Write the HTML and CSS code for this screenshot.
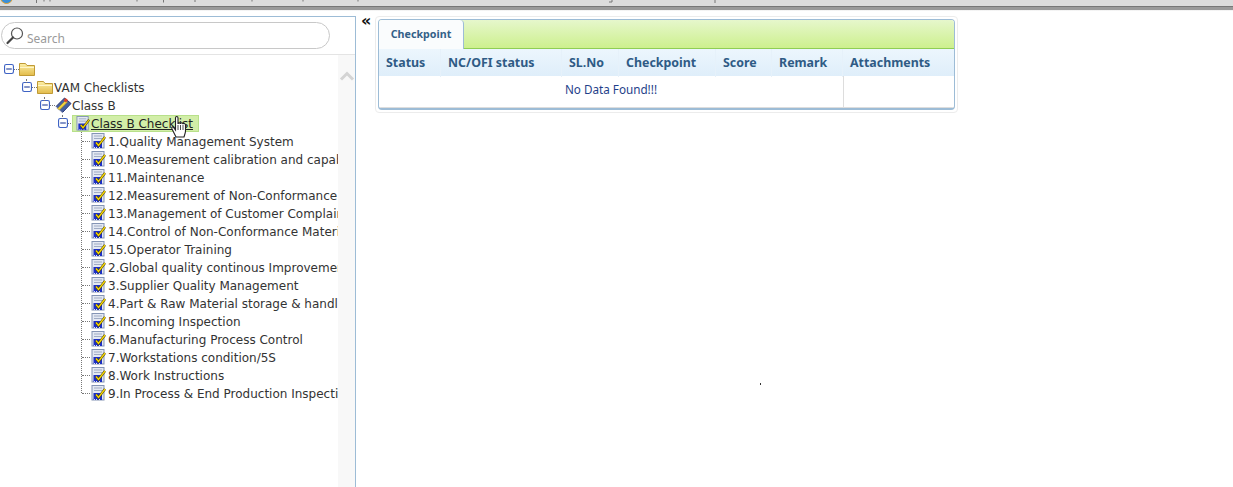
FILE: index.html
```html
<!DOCTYPE html>
<html lang="en">
<head>
<meta charset="utf-8">
<title>Checklist</title>
<link rel="stylesheet" href="styles.css">
</head>
<body>
<svg class="defs" width="0" height="0" aria-hidden="true">
  <defs>
    <linearGradient id="fold" x1="0" y1="0" x2="0" y2="1"><stop offset="0" stop-color="#fdf0a8"/><stop offset="1" stop-color="#e2bb4a"/></linearGradient>
    <symbol id="minus" viewBox="0 0 9 9"><rect x=".5" y=".5" width="8" height="8" rx="1.500" fill="#fff" stroke="#3f63c4"/><path d="M2 4.500h5" stroke="#24409c"/></symbol>
    <symbol id="folder" viewBox="0 0 16 14"><path d="M.5 13.500V1.500h6l1.500 2h7.500v10z" fill="url(#fold)" stroke="#c09a35"/><path d="M1 5.500h14" stroke="#fff6c8"/></symbol>
    <symbol id="book" viewBox="0 0 17 17"><path d="M1 9.500 9.500 1 16 6.500 7.500 15.500z" fill="#46609f" stroke="#2b3a78"/><path d="M1 9.500 7.500 15.500v1L1 11z" fill="#d5d9ea"/><path d="M2.500 11.500 10.500 3.500l2 1.500-8 8z" fill="#f2d23c" stroke="#9c8420" stroke-width=".5"/><path d="M8.500 3.500l2-2.500 2.500 2-2 2.500z" fill="#d6402f"/></symbol>
    <symbol id="check" viewBox="0 0 16 16"><rect x="1" y=".5" width="12" height="14.500" fill="#e3e8f2" stroke="#8494b4"/><path d="M3 3h8M3 5.500h8" stroke="#9fabc4"/><rect x="2.500" y="8" width="8.500" height="7" fill="#1c2fc4"/><path d="M3 14h1v1H3zM5 14h1v1H5zM8 14h1v1H8z" fill="#dfe5f6"/><path d="M5 9.500 7.500 12.500 14 4" fill="none" stroke="#4d4410" stroke-width="2.400"/><path d="M5 9.500 7.500 12.500 14 4" fill="none" stroke="#f8d800" stroke-width="1.300"/></symbol>
  </defs>
</svg>

<header class="chrome">
  <span class="chrome-logo"></span>
  <svg class="chrome-ticks" width="800" height="6" viewBox="0 0 800 6"><path d="M36.500 0v3M44 0v1.500M50 0v1.500M137 0v1.500M163.500 0v2.500M195 0v2M252 0v1.500M303 0v1.500M358 0v1.500M612 0v2h-3M715 0v3" stroke="#777" fill="none"/></svg>
</header>

<div class="app">
  <aside class="side">
    <div class="search-row">
      <label class="search">
        <svg class="search-icon" width="20" height="20" viewBox="0 0 20 20"><circle cx="12" cy="7.500" r="5.500" fill="#fff" stroke="#555" stroke-width="1.200"/><path d="M8 11.500 2.500 17" stroke="#444" stroke-width="2.200" stroke-linecap="round"/></svg>
        <span class="search-text">Search</span>
      </label>
    </div>
    <div class="tree-wrap">
      <div class="tree">
        <div class="node lvl0"><svg class="tg"><use href="#minus"/></svg><i class="dash"></i><svg class="ic-folder"><use href="#folder"/></svg></div>
        <div class="node lvl1"><i class="up"></i><svg class="tg"><use href="#minus"/></svg><i class="dash"></i><svg class="ic-folder"><use href="#folder"/></svg><span>VAM Checklists</span></div>
        <div class="node lvl2"><i class="up"></i><svg class="tg"><use href="#minus"/></svg><i class="dash"></i><svg class="ic-book"><use href="#book"/></svg><span>Class B</span></div>
        <div class="node lvl3"><i class="up"></i><svg class="tg"><use href="#minus"/></svg><i class="dash"></i>
          <a class="selected"><svg class="ic-check"><use href="#check"/></svg><span class="sel-text">Class B Checklist</span></a>
        </div>
        <ul class="leaves">
          <li><svg class="ic-check"><use href="#check"/></svg><span>1.Quality Management System</span></li>
          <li><svg class="ic-check"><use href="#check"/></svg><span>10.Measurement calibration and capability</span></li>
          <li><svg class="ic-check"><use href="#check"/></svg><span>11.Maintenance</span></li>
          <li><svg class="ic-check"><use href="#check"/></svg><span>12.Measurement of Non-Conformance</span></li>
          <li><svg class="ic-check"><use href="#check"/></svg><span>13.Management of Customer Complaints</span></li>
          <li><svg class="ic-check"><use href="#check"/></svg><span>14.Control of Non-Conformance Material</span></li>
          <li><svg class="ic-check"><use href="#check"/></svg><span>15.Operator Training</span></li>
          <li><svg class="ic-check"><use href="#check"/></svg><span>2.Global quality continous Improvement</span></li>
          <li><svg class="ic-check"><use href="#check"/></svg><span>3.Supplier Quality Management</span></li>
          <li><svg class="ic-check"><use href="#check"/></svg><span>4.Part &amp; Raw Material storage &amp; handling</span></li>
          <li><svg class="ic-check"><use href="#check"/></svg><span>5.Incoming Inspection</span></li>
          <li><svg class="ic-check"><use href="#check"/></svg><span>6.Manufacturing Process Control</span></li>
          <li><svg class="ic-check"><use href="#check"/></svg><span>7.Workstations condition/5S</span></li>
          <li><svg class="ic-check"><use href="#check"/></svg><span>8.Work Instructions</span></li>
          <li><svg class="ic-check"><use href="#check"/></svg><span>9.In Process &amp; End Production Inspection</span></li>
        </ul>
      </div>
      <div class="rail">
        <svg width="16" height="10" viewBox="0 0 16 10"><path d="M2 8.500 8 2.500l6 6" fill="none" stroke="#d4d4d4" stroke-width="3"/></svg>
      </div>
    </div>
    <svg class="hand" width="20" height="24" viewBox="0 0 20 24"><path d="M6 22 2 14c-1-2 1-3 2-1l1.500 2V3c0-2 2.500-2 2.500 0v6c0-1.500 2.500-1.500 2.500 0 0-1.500 2.500-1.500 2.500.2 0-1.200 2.500-1 2.500.8V16c0 2-1 4-1.500 6z" fill="#fff" stroke="#222" stroke-width="1.100"/><path d="M8 10v5M10.500 10v5M13 10v5" stroke="#222" stroke-width=".8"/></svg>
  </aside>

  <main class="content">
    <div class="collapse">«</div>
    <section class="card">
      <div class="panel">
        <div class="tabs"><div class="tab">Checkpoint</div></div>
        <div class="table">
          <div class="thead">
            <div class="th">Status</div>
            <div class="th">NC/OFI status</div>
            <div class="th">SL.No</div>
            <div class="th">Checkpoint</div>
            <div class="th">Score</div>
            <div class="th">Remark</div>
            <div class="th">Attachments</div>
          </div>
          <div class="tbody">
            <div class="empty">No Data Found!!!</div>
            <div class="attach"></div>
          </div>
        </div>
      </div>
    </section>
    <span class="speck"></span>
  </main>
</div>
</body>
</html>
```

FILE: styles.css
```css
* { box-sizing: border-box; }
html, body { margin: 0; height: 100%; }
body {
  width: 1233px;
  height: 487px;
  overflow: hidden;
  background: #fff;
  font-family: "DejaVu Sans", sans-serif;
  display: flex;
  flex-direction: column;
}
.defs { position: absolute; }

.chrome {
  height: 11px;
  flex: none;
  background: linear-gradient(#dcdcdc 0, #dcdcdc 6px, #777 6px, #777 7px, #9a9a9a 7px, #9a9a9a 10px, #e8e8e8 10px, #fff 11px);
  position: relative;
  overflow: hidden;
}
.chrome-logo {
  position: absolute;
  left: 0; top: -9px;
  width: 13px; height: 13px;
  border-radius: 50%;
  background: #3a8fd8;
  border: 1px solid #e0a030;
}
.chrome-ticks { position: absolute; left: 0; top: 0; }

.app {
  flex: 1;
  min-height: 0;
  display: flex;
  margin-top: 5px;
}

.side {
  width: 356px;
  flex: none;
  border-top: 1px solid #9dbcd6;
  border-right: 1px solid #9dbcd6;
  display: flex;
  flex-direction: column;
  position: relative;
}
.search-row {
  height: 38px;
  flex: none;
  padding: 5px 0 0 1px;
  border-bottom: 1px solid #e4e4e4;
}
.search {
  display: flex;
  align-items: center;
  width: 329px;
  height: 27px;
  border: 1px solid #c8c8c8;
  border-radius: 14px;
  padding-left: 3px;
  background: #fff;
}
.search-icon { flex: none; }
.search-text {
  margin-left: 2px;
  margin-top: 5px;
  font-family: "Noto Sans", sans-serif;
  font-size: 12px;
  color: #9a9a9a;
}

.tree-wrap { flex: 1; display: flex; min-height: 0; }
.tree {
  width: 338px;
  flex: none;
  padding-top: 5px;
  overflow: hidden;
  font-size: 12px;
  color: #333;
  white-space: nowrap;
}
.tree span { padding-top: 2px; }
.rail {
  flex: 1;
  background: #f8f8f8;
  padding: 16px 0 0 1px;
}
.rail svg { display: block; }

.node {
  height: 18px;
  display: flex;
  align-items: center;
  position: relative;
}
.lvl0 { padding-left: 4px; }
.lvl1 { padding-left: 22px; }
.lvl2 { padding-left: 40px; }
.lvl3 { padding-left: 58px; }
.tg { width: 10px; height: 10px; flex: none; }
.dash {
  width: 5px;
  height: 0;
  border-top: 1px dotted #777;
  flex: none;
}
.up {
  position: absolute;
  top: 1px;
  width: 0;
  height: 4px;
  border-left: 1px dotted #777;
  margin-left: 4px;
}
.ic-folder { width: 16px; height: 14px; flex: none; margin-right: 1px; }
.ic-book { width: 17px; height: 17px; flex: none; }
.ic-check { width: 16px; height: 16px; flex: none; margin-right: 1px; }

.selected {
  display: flex;
  align-items: center;
  height: 17px;
  margin-left: -1px;
  padding: 0 5px 0 3px;
  background: #d2eea8;
  border: 1px solid #b8e08a;
  color: #222;
}
.selected .ic-check { width: 15px; height: 15px; margin-right: 0; }
.sel-text { text-decoration: underline; }

.leaves {
  list-style: none;
  margin: 0 0 0 81px;
  padding: 0;
  position: relative;
}
.leaves::before {
  content: "";
  position: absolute;
  left: 0; top: 0; bottom: 9px;
  border-left: 1px dotted #777;
}
.leaves li {
  height: 18px;
  display: flex;
  align-items: center;
  padding-left: 10px;
  position: relative;
}
.leaves li::before {
  content: "";
  position: absolute;
  left: 1px; top: 9px;
  width: 8px;
  border-top: 1px dotted #777;
}

.hand { position: absolute; left: 170px; top: 98px; }

.content { flex: 1; position: relative; display: flex; align-items: flex-start; }
.collapse {
  width: 19px;
  flex: none;
  padding-left: 5px;
  font-size: 16px;
  line-height: 9px;
  font-weight: bold;
  color: #111;
}
.card {
  width: 583px;
  height: 97px;
  border: 1px solid #ececec;
  border-radius: 4px;
  padding: 2px;
}
.panel {
  height: 91px;
  border: 1px solid #9dbcd6;
  border-bottom-width: 2px;
  border-radius: 4px;
  display: flex;
  flex-direction: column;
  overflow: hidden;
}
.tabs {
  height: 29px;
  flex: none;
  background: linear-gradient(#e6f7cc, #cdf08e);
  border-bottom: 1px solid #8fce55;
}
.tab {
  width: 85px;
  height: 29px;
  background: #fafcfd;
  border-right: 1px solid #9dbcd6;
  border-top-right-radius: 4px;
  font-family: "Noto Sans", sans-serif;
  font-size: 10.700px;
  font-weight: bold;
  color: #336088;
  text-align: center;
  line-height: 28px;
}
.table { flex: 1; display: flex; flex-direction: column; min-height: 0; }
.thead {
  height: 27px;
  flex: none;
  display: grid;
  grid-template-columns: 62px 121px 57px 97px 56px 71px 1fr;
  background: linear-gradient(#ecf6fd, #dfeefa);
}
.th {
  font-family: "Noto Sans", sans-serif;
  font-size: 12.400px;
  font-weight: bold;
  color: #2f5b85;
  line-height: 28px;
  padding-left: 7px;
  border-right: 1px solid #e6f1fa;
  white-space: nowrap;
}
.th:last-child { border-right: 0; }
.tbody {
  flex: 1;
  display: grid;
  grid-template-columns: 465px 1fr;
  border-bottom: 1px solid #ddd;
}
.empty {
  font-family: "Noto Sans", sans-serif;
  font-size: 11.700px;
  color: #1f3f8a;
  text-align: center;
  padding-top: 5px;
  border-right: 1px solid #ddd;
  white-space: nowrap;
}
.speck {
  position: absolute;
  left: 404px;
  top: 367px;
  width: 1px;
  height: 2px;
  background: #333;
}
```
